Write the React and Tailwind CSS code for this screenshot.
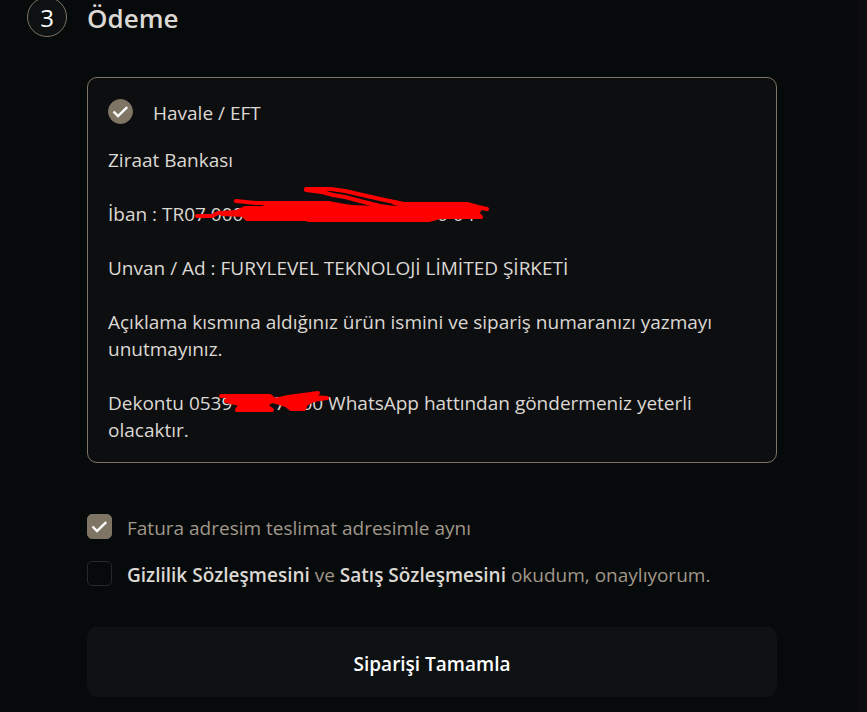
import React, { useState } from 'react';

const CheckMark = () => (
  <svg
    viewBox="0 0 25 25"
    fill="none"
    stroke="#fff"
    strokeWidth="2.4"
    className="absolute inset-0 size-full pointer-events-none opacity-0 peer-checked:opacity-100"
    aria-hidden="true"
  >
    <path d="M5.5 12.5 L10 17 L19.2 8.2" />
  </svg>
);

const CheckBox = ({ id, checked, onChange }) => (
  <span className="relative size-[25px] shrink-0">
    <input
      id={id}
      type="checkbox"
      checked={checked}
      onChange={(e) => onChange(e.target.checked)}
      className="peer block size-full appearance-none rounded-[5px] border border-[#26292a] checked:border-[#7f7565] checked:bg-[#7f7565]"
    />
    <CheckMark />
  </span>
);

// Red marker over the account number
const IbanMarker = () => (
  <svg
    viewBox="190 180 305 50"
    width="305"
    height="50"
    fill="none"
    stroke="#fe0000"
    strokeWidth="4"
    strokeLinecap="round"
    strokeLinejoin="round"
    className="absolute left-[82px] -top-[21px] pointer-events-none"
    aria-hidden="true"
  >
    <path d="M197 216 L212 216 L218 213 L244 212" />
    <path d="M236 201 L256 203 L328 203 L345 206 L365 209" />
    <path d="M306 189 L331 189 L345 191 L380 199 L404 204 L467 204 L478 207 L487 209" />
    <path d="M306 190 L322 192 L333 195 L345 197 L364 202 L380 206 L394 208" />
    <path d="M222 214 L236 212 L245 208 L262 208 L270 205 L295 205 L303 207 L340 207 L394 208 L414 207 L418 204 L467 204 L480 209 L477 213 L481 217 L440 217 L429 220 L309 220 L306 219 L247 219 L243 215 Z" fill="#fe0000" />
    <path d="M394 203 L420 208 L470 207" />
  </svg>
);

// Red marker over the phone number
const PhoneMarker = () => (
  <svg
    viewBox="215 388 120 28"
    width="120"
    height="28"
    fill="none"
    stroke="#fe0000"
    strokeWidth="4"
    strokeLinecap="round"
    strokeLinejoin="round"
    className="absolute left-[107px] -top-[3px] pointer-events-none"
    aria-hidden="true"
  >
    <path d="M221 397 L270 397 L275 401 L288 398 L318 394 L313 398 L327 399 L314 401 L306 405 L304 410 L291 410 L286 406 L273 402 L266 405 L240 405 L226 402 L232 398" fill="#fe0000" />
    <path d="M237 411 L272 411 L262 404 L242 404 Z" fill="#fe0000" />
  </svg>
);

const App = () => {
  const [method, setMethod] = useState('havale');
  const [sameAddress, setSameAddress] = useState(true);
  const [accepted, setAccepted] = useState(false);

  return (
    <div className="flex min-h-screen bg-[#060a0a] font-['Open_Sans','Noto_Sans',sans-serif] text-[19px] leading-[27px] text-[#dcd8d3]">
      <main className="flex-1 min-w-0 pl-[27px] pr-20 pb-4">
        <header className="flex items-center gap-5 -mt-[3px]">
          <span className="size-10 rounded-full border border-[#7f7565] bg-[#0d1111] text-white text-2xl flex items-center justify-center pt-0.5">
            3
          </span>
          <h2 className="text-[26px] font-semibold pt-0.5">Ödeme</h2>
        </header>

        <form className="pl-[60px] pt-10" onSubmit={(e) => e.preventDefault()}>
          {/* Payment method */}
          <section className="rounded-[10px] border border-[#7f7565] bg-[#0d0e10] px-5 pt-5 pb-[18px]">
            <label className="flex items-center gap-5 h-[27px]">
              <span className="relative size-[25px] shrink-0">
                <input
                  type="radio"
                  name="method"
                  value="havale"
                  checked={method === 'havale'}
                  onChange={(e) => setMethod(e.target.value)}
                  className="peer block size-full appearance-none rounded-full border border-[#7f7565] checked:bg-[#7f7565]"
                />
                <CheckMark />
              </span>
              <span className="pt-1">Havale / EFT</span>
            </label>

            <div className="mt-[22px] space-y-[27px]">
              <p>Ziraat Bankası</p>
              <p className="relative">
                İban : TR07 0000 0000 0000 0000 0000 04
                <IbanMarker />
              </p>
              <p>Unvan / Ad : FURYLEVEL TEKNOLOJİ LİMİTED ŞİRKETİ</p>
              <p>Açıklama kısmına aldığınız ürün ismini ve sipariş numaranızı yazmayı unutmayınız.</p>
              <p className="relative">
                Dekontu 0539 000 70 00 WhatsApp hattından göndermeniz yeterli olacaktır.
                <PhoneMarker />
              </p>
            </div>
          </section>

          {/* Agreements */}
          <div className="mt-[51px] space-y-[22px] text-[#a1978a]">
            <div className="flex items-center gap-[15px] h-[25px]">
              <CheckBox id="same-address" checked={sameAddress} onChange={setSameAddress} />
              <label htmlFor="same-address" className="pt-1">Fatura adresim teslimat adresimle aynı</label>
            </div>
            <div className="flex items-center gap-[15px] h-[25px]">
              <CheckBox id="agreements" checked={accepted} onChange={setAccepted} />
              <label htmlFor="agreements" className="pt-1">
                <a href="#gizlilik" className="font-semibold text-[#dcd8d3]">Gizlilik Sözleşmesini</a> ve{' '}
                <a href="#satis" className="font-semibold text-[#dcd8d3]">Satış Sözleşmesini</a> okudum, onaylıyorum.
              </label>
            </div>
          </div>

          <button
            type="submit"
            className="mt-[41px] w-full h-[70px] pt-1 rounded-[10px] bg-[#0e1212] text-white font-semibold"
          >
            Siparişi Tamamla
          </button>
        </form>
      </main>
      <aside className="w-[10px] shrink-0 bg-[#0d0d0f]" />
    </div>
  );
};

export default App;
